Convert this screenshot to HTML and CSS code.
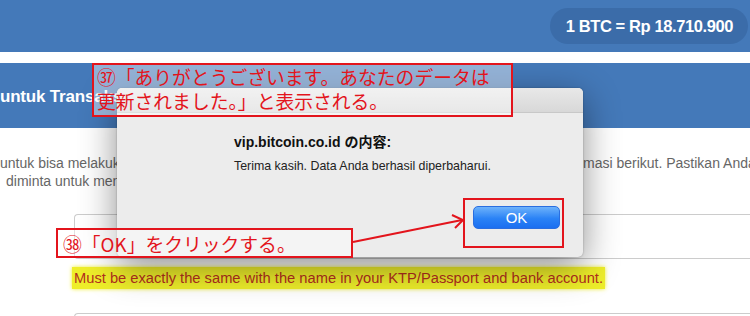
FILE: index.html
```html
<!DOCTYPE html>
<html lang="id">
<head>
    <meta charset="UTF-8">
    <meta name="viewport" content="width=device-width, initial-scale=1.0">
    <title>Verifikasi Data</title>
    <link rel="stylesheet" href="styles.css">
</head>
<body>

    <header class="topbar">
        <div class="rate">1 BTC = Rp 18.710.900</div>
    </header>

    <div class="band">untuk Transaksi</div>

    <div class="content">
        <p class="intro"><span class="behind">untuk bisa melakukan transaksi, Anda harus melengkapi data dan infor</span>masi berikut. Pastikan Anda</p>
        <p class="intro second">diminta untuk mengisi data dengan benar sesuai dokumen resmi Anda.</p>

        <div class="field"></div>
        <p class="hint">Must be exactly the same with the name in your KTP/Passport and bank account.</p>
        <div class="field"></div>
    </div>

    <!-- browser alert -->
    <div class="dialog">
        <div class="dialog-title"></div>
        <div class="dialog-body">
            <div class="dialog-head">vip.bitcoin.co.id の内容:</div>
            <div class="dialog-msg">Terima kasih. Data Anda berhasil diperbaharui.</div>
            <div class="dialog-actions">
                <button class="btn-ok">OK</button>
            </div>
        </div>
    </div>

    <!-- annotations -->
    <div class="note note-37">㊲「ありがとうございます。あなたのデータは<br>更新されました。」と表示される。</div>
    <div class="note note-38">㊳「OK」をクリックする。</div>
    <div class="mark-ok"></div>
    <svg class="arrow" width="120" height="40" viewBox="0 0 120 40">
        <line x1="2" y1="31" x2="111" y2="9" stroke="#e3141c" stroke-width="2"/>
        <polyline points="101,4 112,9 104,17" fill="none" stroke="#e3141c" stroke-width="2"/>
    </svg>

</body>
</html>
```

FILE: styles.css
```css
body {
    margin: 0;
    width: 750px;
    height: 316px;
    overflow: hidden;
    position: relative;
    background: #fff;
    font-family: "Liberation Sans", Arial, sans-serif;
}

.topbar {
    height: 52px;
    background-color: #4479b9;
    display: flex;
    justify-content: flex-end;
    align-items: center;
    padding-right: 2px;
}

.rate {
    height: 36px;
    line-height: 36px;
    padding: 0 15px 0 16px;
    border-radius: 18px;
    background-color: #3b6ca9;
    color: #fff;
    font-weight: bold;
    font-size: 16.5px;
    letter-spacing: -0.4px;
}

.band {
    margin-top: 11px;
    height: 65px;
    line-height: 68px;
    background-color: #4479b9;
    color: #fff;
    font-weight: bold;
    font-size: 17px;
    letter-spacing: -0.2px;
}

.content {
    padding-top: 26px;
}

.intro {
    margin: 0;
    white-space: nowrap;
    font-size: 14px;
    line-height: 18px;
    color: #666;
}

.intro .behind {
    display: inline-block;
    width: 583px;
    overflow: hidden;
    vertical-align: top;
}

.intro.second {
    padding-left: 6px;
}

.field {
    margin: 24px 0 0 74px;
    height: 43px;
    border: 1px solid #ccc;
    border-right: none;
    border-radius: 4px 0 0 4px;
}

.hint {
    display: inline-block;
    margin: 8px 0 0 72px;
    height: 22px;
    line-height: 22px;
    padding: 0 2px;
    background-color: #eeee2a;
    box-shadow: 0 0 4px #eeee2a;
    color: #b3301e;
    font-size: 14.7px;
}

.hint + .field {
    margin-top: 24px;
}

.dialog {
    position: absolute;
    left: 117px;
    top: 88px;
    width: 466px;
    height: 169px;
    background-color: #ececec;
    border-radius: 5px;
    box-shadow: 0 10px 36px rgba(0, 0, 0, 0.45), 0 0 2px rgba(0, 0, 0, 0.3);
    overflow: hidden;
}

.dialog-title {
    height: 24px;
    background: linear-gradient(#e8e8e8, #d8d8d8);
    border-bottom: 1px solid #c8c8c8;
}

.dialog-body {
    padding: 20px 0 0 117px;
}

.dialog-head {
    font-family: "Liberation Sans", "Noto Sans CJK JP", sans-serif;
    font-weight: bold;
    font-size: 14px;
    line-height: 18px;
    color: #111;
}

.dialog-msg {
    margin-top: 7px;
    font-size: 12.4px;
    line-height: 16px;
    color: #222;
}

.dialog-actions {
    display: flex;
    justify-content: flex-end;
    padding-right: 23px;
    margin-top: 32px;
}

.btn-ok {
    width: 87px;
    height: 23px;
    border: 1px solid #2a6ee0;
    border-radius: 5px;
    background: linear-gradient(#6db2fb, #2a82f6 55%, #1b6ff0);
    color: #fff;
    font-family: "Liberation Sans", Arial, sans-serif;
    font-size: 15px;
    padding: 0;
}

.note {
    position: absolute;
    border: 2px solid #e3141c;
    background-color: rgba(255, 255, 255, 0.42);
    color: #e3141c;
    font-family: "Noto Sans CJK JP", sans-serif;
    font-size: 18.8px;
    line-height: 24px;
    padding: 0 3px;
    white-space: nowrap;
    box-sizing: border-box;
}

.note-37 {
    left: 92px;
    top: 63px;
    width: 421px;
    height: 54px;
}

.note-38 {
    left: 56px;
    top: 228px;
    width: 297px;
    height: 30px;
    padding-left: 5px;
    line-height: 27px;
}

.mark-ok {
    position: absolute;
    left: 463px;
    top: 198px;
    width: 101px;
    height: 50px;
    border: 2px solid #e3141c;
    box-sizing: border-box;
}

.arrow {
    position: absolute;
    left: 351px;
    top: 211px;
}
```
